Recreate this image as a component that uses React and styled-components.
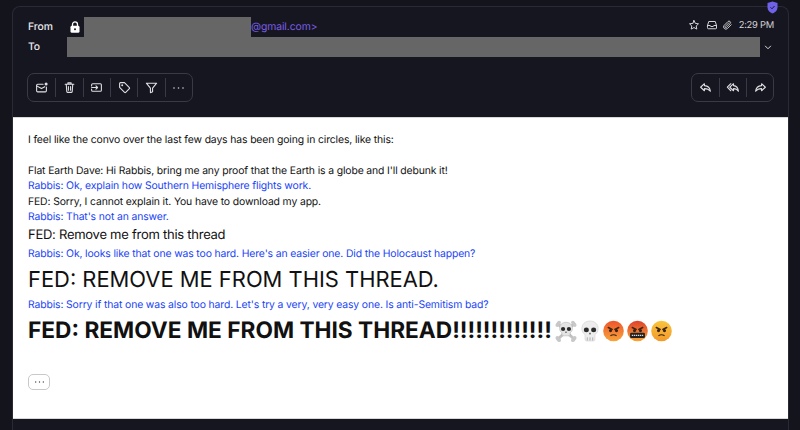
import React from "react";
import styled, { createGlobalStyle } from "styled-components";

const Global = createGlobalStyle`
  html, body { margin: 0; padding: 0; background: #14141d; height: 430px; overflow: hidden; }
  * { box-sizing: border-box; }
`;
const Page = styled.div`
  width: 800px; height: 430px; padding: 6px 11px 0 12px; background: #14141d;
  font-family: Inter, "Liberation Sans", sans-serif; overflow: hidden; text-rendering: geometricPrecision;
`;
const Card = styled.div`
  position: relative; height: 424px; display: flex; flex-direction: column;
  border: 1px solid #2a2a36; border-bottom: none; border-radius: 8px 8px 0 0; background: #161620;
`;
const Shield = styled.svg`
  position: absolute; top: -6px; right: 10px; width: 11px; height: 13px;
`;
const Header = styled.header`
  height: 110px; flex: none; padding: 10px 14px 0; display: flex; flex-direction: column;
`;
const Row = styled.div`
  height: 20px; display: flex; align-items: center; flex: none; padding-left: 1px;
`;
const Label = styled.span`
  width: 39px; flex: none; font-size: 10.4px; letter-spacing: -.1px; font-weight: 500; color: #e8e8ec; padding-bottom: 1px;
`;
const LockWrap = styled.span`
  width: 17px; flex: none; display: flex; align-items: center; padding-left: 3px;
`;
const Redacted = styled.div`
  height: 20px; background: #666666; width: ${p => p.$w}px; flex: none;
`;
const Address = styled.span`
  font-size: 10.4px; letter-spacing: -.1px; color: #7a5fe6; padding-bottom: 1px;
`;
const Meta = styled.div`
  margin-left: auto; display: flex; align-items: center; color: #d4d4d8; font-size: 9.4px; letter-spacing: -.25px; padding-bottom: 4px;
`;
const MetaIcon = styled.span`
  display: flex; margin-right: ${p => p.$gap}px;
`;
const Chevron = styled.span`
  margin-left: 3px; display: flex; width: 9px; justify-content: center;
`;
const Tools = styled.div`
  margin-top: 16px; display: flex; justify-content: space-between;
`;
const Group = styled.div`
  height: 29px; display: flex; align-items: center; border: 1px solid #3a3a47; border-radius: 7px;
`;
const Tool = styled.button`
  width: ${p => p.$w || 27.33}px; height: 19px; padding: 0; background: none; border: none; display: flex;
  align-items: center; justify-content: center; color: #e0e0e4;
  & + & { border-left: 1px solid #3a3a47; }
`;
const Mail = styled.div`
  flex: none; height: 302px; background: #fff; padding: 14px 15px 0; color: #111;
  border-top: 1px solid #d8d8d8; border-bottom: 1px solid #d8d8d8;
`;
const Line = styled.div`
  font-size: ${p => p.$size || 10.4}px; letter-spacing: ${p => p.$track ?? -0.13}px; line-height: ${p => p.$lh || 15.5}px;
  font-weight: ${p => p.$bold ? 700 : 400}; color: ${p => p.$blue ? "#1a44f5" : "#111"};
  margin-top: ${p => p.$mt || 0}px; white-space: nowrap; display: flex; align-items: center;
`;
const Emojis = styled.span`
  display: inline-flex; align-items: center; gap: 3px; margin-left: 3px; letter-spacing: 0;
`;
const More = styled.button`
  margin-top: 25px; display: flex; align-items: center; justify-content: center; width: 22px; height: 16px;
  border: 1px solid #c9c9c9; border-radius: 5px; background: #fff; padding: 0;
`;

const I = ({ children, w = 13, h = 13, vb = "0 0 24 24", sw = 2 }) => (
  <svg width={w} height={h} viewBox={vb} fill="none" stroke="currentColor" strokeWidth={sw} strokeLinecap="round" strokeLinejoin="round">{children}</svg>
);

const Face = ({ top, bottom, children }) => {
  const id = "g" + top.slice(1);
  return (
    <svg width="21" height="22" viewBox="0 0 24 25">
      <defs><linearGradient id={id} x1="0" y1="0" x2="0" y2="1"><stop offset="0" stopColor={top} /><stop offset="1" stopColor={bottom} /></linearGradient></defs>
      <circle cx="12" cy="12.5" r="11.8" fill={`url(#${id})`} />
      {children}
    </svg>
  );
};
const Brows = () => (
  <g stroke="#3a2314" strokeWidth="1.6" strokeLinecap="round" fill="#3a2314">
    <path d="M6 8.500l4.500 2.200M18 8.500l-4.500 2.200" fill="none" />
    <circle cx="8.600" cy="12" r="1" /><circle cx="15.400" cy="12" r="1" />
  </g>
);
const Bones = () => (
  <svg width="22" height="22" viewBox="0 0 24 24">
    <g stroke="#c2c2c2" strokeWidth="3.200" strokeLinecap="round">
      <path d="M3 4L21 21M21 4L3 21" />
    </g>
    <g fill="#c8c8c8">
      <circle cx="2.500" cy="5.500" r="2" /><circle cx="4.500" cy="2.800" r="2" />
      <circle cx="21.500" cy="5.500" r="2" /><circle cx="19.500" cy="2.800" r="2" />
      <circle cx="2.500" cy="19.500" r="2" /><circle cx="4.500" cy="22" r="2" />
      <circle cx="21.500" cy="19.500" r="2" /><circle cx="19.500" cy="22" r="2" />
    </g>
    <path d="M12 2.500c-4.400 0-7 2.800-7 6.600 0 2.400 1 4 2.600 5v3.200h8.800v-3.200c1.600-1 2.600-2.600 2.600-5 0-3.800-2.600-6.600-7-6.600z" fill="#e4e4e4" stroke="#aaa" strokeWidth=".5" />
    <circle cx="8.800" cy="9.800" r="2.300" fill="#2b2b2b" />
    <circle cx="15.200" cy="9.800" r="2.300" fill="#2b2b2b" />
    <path d="M12 12l-1 2h2z" fill="#444" />
  </svg>
);
const Skull = () => (
  <svg width="20" height="22" viewBox="0 0 22 24">
    <path d="M11 1C5.600 1 2 4.600 2 9.400c0 3 1.300 5.200 3.500 6.400V21c0 1.200 1 2 2 2h7c1 0 2-.8 2-2v-5.200c2.200-1.200 3.500-3.400 3.500-6.400C20 4.600 16.400 1 11 1z" fill="#ededed" stroke="#c4c4c4" strokeWidth=".5" />
    <ellipse cx="7" cy="10.800" rx="2.800" ry="2.600" fill="#2b2b2b" />
    <ellipse cx="15" cy="10.800" rx="2.800" ry="2.600" fill="#2b2b2b" />
    <path d="M11 13.500l-1.200 2.200h2.400z" fill="#444" />
    <path d="M8 19v3.500M11 19v3.500M14 19v3.500" stroke="#999" strokeWidth=".8" />
  </svg>
);

const Dots = ({ c = "#cfcfd4", w = 13 }) => (
  <svg width={w} height="4" viewBox="0 0 13 4" fill={c}><circle cx="2" cy="2" r=".8" /><circle cx="6.500" cy="2" r=".8" /><circle cx="11" cy="2" r=".8" /></svg>
);

export default function App() {
  return (
    <Page>
      <Global />
      <Card>
        <Shield viewBox="0 0 11 13">
          <path d="M5.500 0.500L10.500 2v4.500c0 3-2.200 5-5 6-2.800-1-5-3-5-6V2z" fill="#6f62e8" />
          <path d="M3.500 6.300l1.500 1.500 2.500-2.800" stroke="#1b1b28" strokeWidth="1" fill="none" />
        </Shield>
        <Header>
          <Row>
            <Label>From</Label>
            <LockWrap>
              <svg width="10" height="12" viewBox="0 0 10 12"><path d="M2.500 5V3.400a2.500 2.500 0 0 1 5 0V5" fill="none" stroke="#fff" strokeWidth="1.300" /><rect x="0.500" y="4.800" width="9" height="7" rx="1.400" fill="#fff" /><circle cx="5" cy="8.200" r="1" fill="#161620" /></svg>
            </LockWrap>
            <Redacted $w={167} />
            <Address>@gmail.com&gt;</Address>
            <Meta>
              <MetaIcon $gap={6}><I w={12} h={12}><path d="M12 3l2.700 5.800 6.300.8-4.600 4.300 1.200 6.300L12 17.100l-5.600 3.100 1.200-6.300L3 9.600l6.300-.8z" /></I></MetaIcon>
              <MetaIcon $gap={4}><I w={12} h={12}><path d="M3 13l2.500-8h13L21 13v5a1.500 1.500 0 0 1-1.500 1.500h-15A1.500 1.500 0 0 1 3 18z" /><path d="M3 13h5.500l1 2h5l1-2H21" /></I></MetaIcon>
              <MetaIcon $gap={6}><I w={11} h={12}><path d="M20 11.500l-8.500 8.500a5 5 0 0 1-7-7L13 4.500a3.300 3.300 0 0 1 4.700 4.700L9.500 17.300a1.600 1.600 0 0 1-2.300-2.300l7.800-7.800" /></I></MetaIcon>
              <span>2:29 PM</span>
            </Meta>
          </Row>
          <Row>
            <Label>To</Label>
            <Redacted $w={693} />
            <Chevron>
              <svg width="8" height="5" viewBox="0 0 9 6" fill="none" stroke="#d8d8dc" strokeWidth="1.200"><path d="M1 1l3.500 3.500L8 1" /></svg>
            </Chevron>
          </Row>
          <Tools>
            <Group>
              <Tool><I><path d="M21 11v7a2 2 0 0 1-2 2H5a2 2 0 0 1-2-2V8a2 2 0 0 1 2-2h10" /><path d="M3 9l9 5 6-3.500" /><circle cx="20.500" cy="5.500" r="2.800" fill="currentColor" stroke="none" /></I></Tool>
              <Tool><I><path d="M4 6h16M9 6V3.500h6V6M6 6l1 13.500a2 2 0 0 0 2 1.500h6a2 2 0 0 0 2-1.500L18 6M10 10v7M14 10v7" /></I></Tool>
              <Tool><I><path d="M3 9V7a2 2 0 0 1 2-2h14a2 2 0 0 1 2 2v10a2 2 0 0 1-2 2H5a2 2 0 0 1-2-2v-2" /><path d="M3 12h11M11 9l3 3-3 3" /></I></Tool>
              <Tool><I><path d="M3 4.500A1.500 1.500 0 0 1 4.500 3h7.400l9.100 9.100a1.500 1.500 0 0 1 0 2.100l-6.800 6.800a1.500 1.500 0 0 1-2.100 0L3 11.900z" /><circle cx="7.800" cy="7.800" r=".8" /></I></Tool>
              <Tool><I w={13} h={13}><path d="M2.500 4h19L14 13v7l-4 1.500V13z" /></I></Tool>
              <Tool><Dots /></Tool>
            </Group>
            <Group>
              <Tool $w={27}><I><path d="M10 5L3 11.500 10 18v-4c5 0 8 1 11 5-.5-6-4-10-11-10.500z" /></I></Tool>
              <Tool $w={27}><I w={14} h={13}><path d="M13 5l-7 6.500 7 6.500v-4c4 0 6.500 1 9 5-.5-6-3-10-9-10.500z" /><path d="M8 5l-6.500 6.500L8 18" /></I></Tool>
              <Tool $w={27}><I><path d="M14 5l7 6.500-7 6.500v-4c-5 0-8 1-11 5 .5-6 4-10 11-10.500z" /></I></Tool>
            </Group>
          </Tools>
        </Header>
        <Mail>
          <Line>I feel like the convo over the last few days has been going in circles, like this:</Line>
          <Line $mt={15}>Flat Earth Dave: Hi Rabbis, bring me any proof that the Earth is a globe and I'll debunk it!</Line>
          <Line $blue>Rabbis: Ok, explain how Southern Hemisphere flights work.</Line>
          <Line>FED: Sorry, I cannot explain it. You have to download my app.</Line>
          <Line $blue $lh={16}>Rabbis: That's not an answer.</Line>
          <Line $size={13} $track={-0.26} $lh={20}>FED: Remove me from this thread</Line>
          <Line $blue $lh={17}>Rabbis: Ok, looks like that one was too hard. Here's an easier one. Did the Holocaust happen?</Line>
          <Line $size={21.9} $track={0} $lh={36}>FED: REMOVE ME FROM THIS THREAD.</Line>
          <Line $blue $lh={14.5}>Rabbis: Sorry if that one was also too hard. Let's try a very, very easy one. Is anti-Semitism bad?</Line>
          <Line $size={22.7} $track={0} $lh={36} $bold>
            FED: REMOVE ME FROM THIS THREAD!!!!!!!!!!!!!
            <Emojis>
              <Bones />
              <Skull />
              <Face top="#f0542a" bottom="#f7a53c"><Brows /><path d="M8.500 18q3.500-2.500 7 0" stroke="#3a2314" strokeWidth="1.300" fill="none" /></Face>
              <Face top="#e0402a" bottom="#f6a63a"><Brows /><rect x="3.500" y="14.500" width="17" height="6" rx="1.500" fill="#222" /><path d="M5.500 17.500h13" stroke="#ddd" strokeWidth="1.500" strokeDasharray="1.500 .8" /></Face>
              <Face top="#f9c53e" bottom="#f29a2a"><Brows /><path d="M8.500 18q3.500-2.500 7 0" stroke="#3a2314" strokeWidth="1.300" fill="none" /></Face>
            </Emojis>
          </Line>
          <More><Dots c="#444" w={11} /></More>
        </Mail>
      </Card>
    </Page>
  );
}
